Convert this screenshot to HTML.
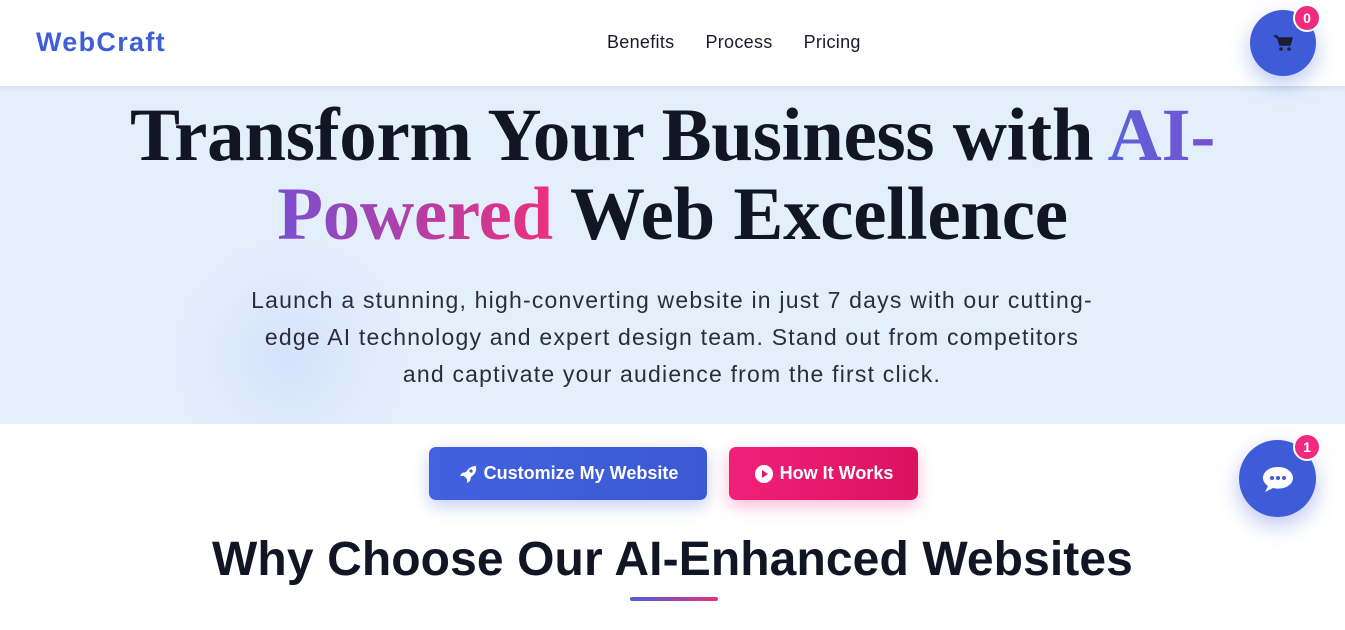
<!DOCTYPE html>
<html><head><meta charset="utf-8"><style>
*{margin:0;padding:0;box-sizing:border-box}
body{width:1345px;height:630px;overflow:hidden;background:#fff;font-family:"Liberation Sans",sans-serif;position:relative}
.nav{position:absolute;top:0;left:0;width:1345px;height:86px;background:#fff;box-shadow:0 2px 6px rgba(0,0,0,.08);z-index:2}
.logo{position:absolute;left:36px;top:27px;font-size:27px;font-weight:bold;color:#3f5fd9;letter-spacing:1.3px}
.links{position:absolute;top:32px;left:607px;font-size:18px;color:#1a1a2a;letter-spacing:0.3px}
.links span{margin-right:31px}
.hero{position:absolute;top:86px;left:0;width:1345px;height:338px;background:radial-gradient(circle at 290px 270px,#d6e2fb 0,rgba(214,226,251,0) 120px),radial-gradient(circle at 1030px 420px,#ecdff5 0,rgba(236,223,245,0) 90px),#e4effc}
h1{position:absolute;top:96px;left:0;width:1345px;text-align:center;font-family:"Liberation Serif",serif;font-weight:bold;font-size:75px;line-height:79px;color:#111524;letter-spacing:-0.3px}
.g1{background:linear-gradient(90deg,#5a62d9,#7752cf);-webkit-background-clip:text;color:transparent}
.g2{background:linear-gradient(90deg,#7a4fd0,#ee2f7c);-webkit-background-clip:text;color:transparent}
p.sub{position:absolute;top:282px;left:237px;width:870px;text-align:center;font-size:23px;line-height:37px;color:#2a2d3e;letter-spacing:1.2px}
.btn{position:absolute;top:447px;height:53px;border-radius:7px;color:#fff;font-weight:bold;font-size:18px;display:flex;align-items:center;justify-content:center;gap:6px}
.b1{left:429px;width:278px;background:linear-gradient(90deg,#4161e0,#3b59d2);box-shadow:0 6px 16px rgba(65,97,224,.3)}
.b2{left:729px;width:189px;background:linear-gradient(90deg,#f02079,#dc1260);box-shadow:0 6px 16px rgba(240,32,121,.3)}
h2{position:absolute;top:532px;left:0;width:1345px;text-align:center;font-size:48px;font-weight:bold;color:#111524;letter-spacing:0.1px}
.ul{position:absolute;top:597px;left:630px;width:88px;height:4px;border-radius:2px;background:linear-gradient(90deg,#4a5fd8,#e83083)}
.circ{position:absolute;border-radius:50%;background:#3e5bd8;display:flex;align-items:center;justify-content:center;box-shadow:0 8px 22px rgba(62,91,216,.35);z-index:3}
.badge{position:absolute;width:28px;height:28px;border-radius:50%;background:#f02a7e;color:#fff;font-weight:bold;font-size:14px;display:flex;align-items:center;justify-content:center;border:2px solid #fff;z-index:4}
</style></head><body>
<div class="nav"><div class="logo">WebCraft</div><div class="links"><span>Benefits</span><span>Process</span><span>Pricing</span></div></div>
<div class="hero"></div>
<h1>Transform Your Business with <span class="g1">AI-</span><br><span class="g2">Powered</span> Web Excellence</h1>
<p class="sub">Launch a stunning, high-converting website in just 7 days with our cutting-<br>edge AI technology and expert design team. Stand out from competitors<br>and captivate your audience from the first click.</p>
<div class="btn b1"><svg width="20" height="20" viewBox="0 0 20 20"><path d="M18 2c-5 0-8 3-10 6l-4 1-2 3 4 0 3 3 0 4 3-2 1-4c3-2 6-5 5-11z" fill="#fff"/><circle cx="13" cy="7" r="1.6" fill="#3e5bd8"/></svg>Customize My Website</div>
<div class="btn b2"><svg width="20" height="20" viewBox="0 0 20 20"><circle cx="10" cy="10" r="9" fill="#fff"/><path d="M8 6l6 4-6 4z" fill="#e4186b"/></svg>How It Works</div>
<h2>Why Choose Our AI-Enhanced Websites</h2>
<div class="ul"></div>
<div class="circ" style="left:1250px;top:10px;width:66px;height:66px"><svg width="20" height="18" viewBox="0 0 20 18"><path d="M1 2h3l3 9h10l2-7H5z" fill="#1a1d33" stroke="#1a1d33" stroke-width="1.5"/><circle cx="8" cy="15" r="1.8" fill="#1a1d33"/><circle cx="16" cy="15" r="1.8" fill="#1a1d33"/></svg></div>
<div class="badge" style="left:1293px;top:4px">0</div>
<div class="circ" style="left:1239px;top:440px;width:77px;height:77px"><svg width="34" height="30" viewBox="0 0 34 30"><path d="M17 3C8 3 2 8 2 14c0 3 2 6 5 8l-3 6 8-4c2 .5 3 .6 5 .6 9 0 15-5 15-10.6S26 3 17 3z" fill="#fff"/><circle cx="11" cy="14" r="2" fill="#3e5bd8"/><circle cx="17" cy="14" r="2" fill="#3e5bd8"/><circle cx="23" cy="14" r="2" fill="#3e5bd8"/></svg></div>
<div class="badge" style="left:1293px;top:433px">1</div>
</body></html>
